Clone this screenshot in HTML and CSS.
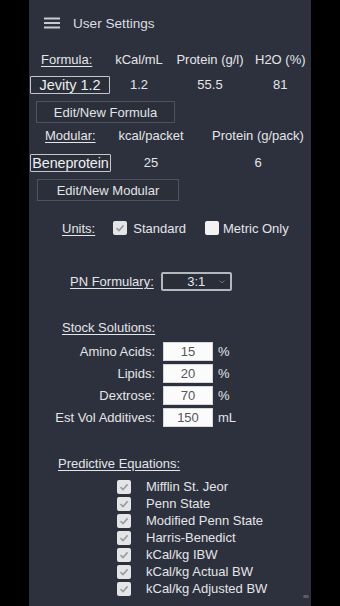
FILE: index.html
```html
<!DOCTYPE html>
<html>
<head>
<meta charset="utf-8">
<link rel="stylesheet" href="styles.css">
</head>
<body>
<div class="screen">
  <header class="topbar">
    <svg class="menu" width="16" height="12" viewBox="0 0 16 12"><rect x="0" y="0.5" width="16" height="2" fill="#c9cbd0"/><rect x="0" y="5" width="16" height="2" fill="#c9cbd0"/><rect x="0" y="9.5" width="16" height="2" fill="#c9cbd0"/></svg>
    <span class="title">User Settings</span>
  </header>

  <section class="grid formula">
    <span class="lbl u">Formula:</span>
    <span class="c">kCal/mL</span>
    <span class="c">Protein (g/l)</span>
    <span class="c">H2O (%)</span>
    <button class="pick">Jevity 1.2</button>
    <span class="c">1.2</span>
    <span class="c">55.5</span>
    <span class="c">81</span>
  </section>
  <button class="edit edit-formula">Edit/New Formula</button>

  <section class="grid modular">
    <span class="lbl u">Modular:</span>
    <span class="c">kcal/packet</span>
    <span class="c c3">Protein (g/pack)</span>
    <button class="pick pick2">Beneprotein</button>
    <span class="c">25</span>
    <span class="c c3">6</span>
  </section>
  <button class="edit edit-modular">Edit/New Modular</button>

  <section class="units">
    <span class="u">Units:</span>
    <span class="box on"><svg width="14" height="14" viewBox="0 0 14 14"><path d="M3.5 7.2 L6 9.6 L10.6 4.4" fill="none" stroke="#9a9ca2" stroke-width="1.6"/></svg></span>
    <span class="opt">Standard</span>
    <span class="box box2"></span>
    <span class="opt opt2">Metric Only</span>
  </section>

  <section class="pn">
    <span class="u">PN Formulary:</span>
    <span class="select">3:1<svg class="chev" width="6" height="4" viewBox="0 0 6 4"><path d="M0.5 0.5 L3 3 L5.5 0.5" fill="none" stroke="#6e717a" stroke-width="1"/></svg></span>
  </section>

  <section class="stock">
    <span class="u">Stock Solutions:</span>
  </section>
  <section class="inputs">
    <span class="il">Amino Acids:</span><span class="field">15</span><span class="unit">%</span>
    <span class="il">Lipids:</span><span class="field">20</span><span class="unit">%</span>
    <span class="il">Dextrose:</span><span class="field">70</span><span class="unit">%</span>
    <span class="il">Est Vol Additives:</span><span class="field">150</span><span class="unit">mL</span>
  </section>

  <section class="pred">
    <span class="u">Predictive Equations:</span>
  </section>
  <ul class="checks">
    <li><span class="box on"><svg width="14" height="14" viewBox="0 0 14 14"><path d="M3.5 7.2 L6 9.6 L10.6 4.4" fill="none" stroke="#9a9ca2" stroke-width="1.6"/></svg></span>Mifflin St. Jeor</li>
    <li><span class="box on"><svg width="14" height="14" viewBox="0 0 14 14"><path d="M3.5 7.2 L6 9.6 L10.6 4.4" fill="none" stroke="#9a9ca2" stroke-width="1.6"/></svg></span>Penn State</li>
    <li><span class="box on"><svg width="14" height="14" viewBox="0 0 14 14"><path d="M3.5 7.2 L6 9.6 L10.6 4.4" fill="none" stroke="#9a9ca2" stroke-width="1.6"/></svg></span>Modified Penn State</li>
    <li><span class="box on"><svg width="14" height="14" viewBox="0 0 14 14"><path d="M3.5 7.2 L6 9.6 L10.6 4.4" fill="none" stroke="#9a9ca2" stroke-width="1.6"/></svg></span>Harris-Benedict</li>
    <li><span class="box on"><svg width="14" height="14" viewBox="0 0 14 14"><path d="M3.5 7.2 L6 9.6 L10.6 4.4" fill="none" stroke="#9a9ca2" stroke-width="1.6"/></svg></span>kCal/kg IBW</li>
    <li><span class="box on"><svg width="14" height="14" viewBox="0 0 14 14"><path d="M3.5 7.2 L6 9.6 L10.6 4.4" fill="none" stroke="#9a9ca2" stroke-width="1.6"/></svg></span>kCal/kg Actual BW</li>
    <li><span class="box on"><svg width="14" height="14" viewBox="0 0 14 14"><path d="M3.5 7.2 L6 9.6 L10.6 4.4" fill="none" stroke="#9a9ca2" stroke-width="1.6"/></svg></span>kCal/kg Adjusted BW</li>
  </ul>
  <span class="grip"></span>
</div>
</body>
</html>
```

FILE: styles.css
```css
html, body {
  margin: 0;
  padding: 0;
  background: #000;
}
body {
  width: 340px;
  height: 606px;
  overflow: hidden;
  font-family: "Liberation Sans", Arial, sans-serif;
  font-size: 13px;
  color: #e4e5e8;
}
.screen {
  position: relative;
  margin-left: 29px;
  width: 282px;
  height: 606px;
  background: #2d313d;
  display: flex;
  flex-direction: column;
  align-items: flex-start;
}
.u {
  text-decoration: underline;
  text-underline-offset: 2px;
}
.topbar {
  height: 46px;
  display: flex;
  align-items: center;
  padding-left: 15px;
  gap: 13px;
}
.menu { display: block; }
.title {
  font-size: 13.6px;
  color: #dcdde1;
}
.grid {
  display: grid;
  width: 282px;
  align-items: center;
}
.formula {
  margin-top: 6px;
  grid-template-columns: 84px 52px 90px 1fr;
  grid-template-rows: 16px 18px;
  row-gap: 8px;
}
.formula .c:nth-child(4), .formula .c:nth-child(8) {
  padding-right: 6px;
}
.modular {
  margin-top: 5px;
  grid-template-columns: 84px 76px 1fr;
  grid-template-rows: 16px 18px;
  row-gap: 10px;
}
.c {
  text-align: center;
  white-space: nowrap;
  line-height: 16px;
}
.c3 { padding-left: 16px; }
.lbl {
  line-height: 16px;
  padding-left: 12px;
}
.modular .lbl { padding-left: 16px; }
.pick {
  margin: 0 0 0 1px;
  width: 80px;
  height: 18px;
  padding: 0;
  box-sizing: border-box;
  border: 1.5px solid #c4c6cb;
  border-radius: 1px;
  background: #2a2e39;
  color: #eceef0;
  font-family: inherit;
  font-size: 14.5px;
  line-height: 14px;
  white-space: nowrap;
  overflow: visible;
}
.pick2 {
  width: 81px;
  font-size: 14.4px;
  letter-spacing: -0.1px;
}
.edit {
  box-sizing: border-box;
  height: 22px;
  padding: 0;
  border: 1px solid #4f5360;
  background: #2b2f3a;
  color: #e2e3e6;
  font-family: inherit;
  font-size: 13px;
}
.edit-formula {
  margin: 7px 0 0 7px;
  width: 139px;
}
.edit-modular {
  margin: 7px 0 0 8px;
  width: 142px;
}
.units {
  margin-top: 19px;
  height: 16px;
  display: flex;
  align-items: center;
  padding-left: 33px;
}
.box {
  box-sizing: border-box;
  width: 14px;
  height: 14px;
  border-radius: 2px;
  background: #e4e5e7;
  display: block;
  flex: none;
}
.box svg { display: block; }
.units .box.on { margin-left: 18px; }
.opt { margin-left: 6px; }
.box2 { margin-left: 19px; background: #f2f2f3; }
.opt2 { margin-left: 4px; }
.pn {
  margin-top: 36px;
  display: flex;
  align-items: center;
  padding-left: 41px;
  gap: 7px;
}
.select {
  position: relative;
  box-sizing: border-box;
  width: 71px;
  height: 19px;
  border: 2px solid #b4b7bd;
  border-radius: 2px;
  background: #2a2e39;
  text-align: center;
  line-height: 15px;
  color: #e4e5e8;
}
.chev {
  position: absolute;
  right: 5px;
  top: 6px;
}
.stock {
  margin-top: 29px;
  padding-left: 33px;
  line-height: 16px;
}
.inputs {
  margin-top: 6px;
  display: grid;
  grid-template-columns: 130px 50px auto;
  grid-auto-rows: 19px;
  row-gap: 3px;
  align-items: center;
}
.il {
  text-align: right;
  padding-right: 4px;
  white-space: nowrap;
}
.field {
  box-sizing: border-box;
  height: 19px;
  background: #fbfbfb;
  border: 1px solid #d6d7da;
  margin-left: 4px;
  width: 50px;
  text-align: center;
  line-height: 17px;
  color: #55575c;
  font-size: 13px;
}
.unit {
  margin-left: 9px;
}
.pred {
  margin-top: 29px;
  padding-left: 29px;
  line-height: 16px;
}
.checks {
  list-style: none;
  margin: 6px 0 0 0;
  padding: 0 0 0 88px;
}
.checks li {
  height: 17px;
  display: flex;
  align-items: center;
  gap: 15px;
  white-space: nowrap;
}
.grip {
  position: absolute;
  left: 274px;
  top: 595px;
  width: 6px;
  height: 3px;
  border-radius: 2px;
  background: #5a5d66;
}
```
